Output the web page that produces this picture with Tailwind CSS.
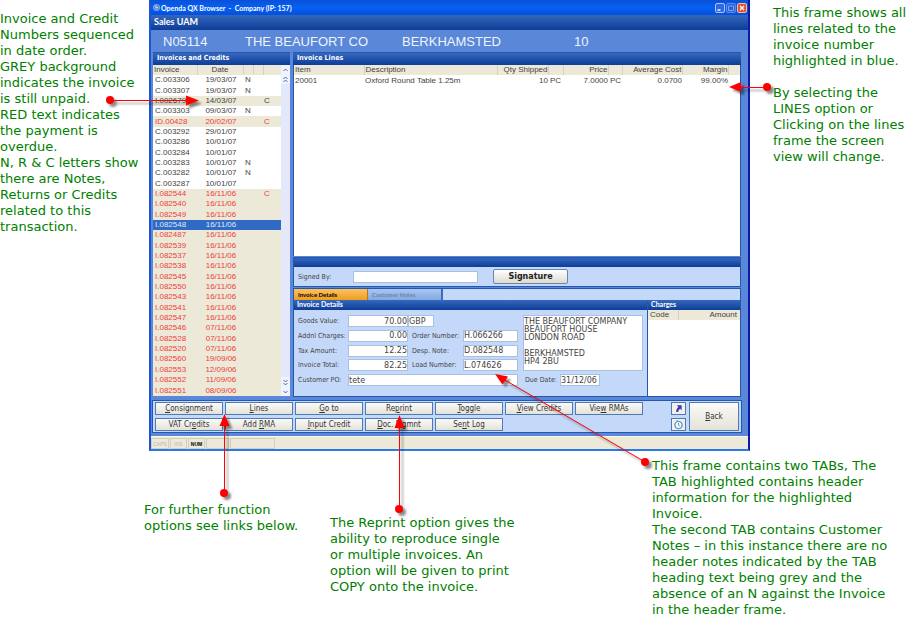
<!DOCTYPE html>
<html lang="en">
<head>
  <meta charset="UTF-8" />
  <title>Sales UAM - Invoices and Credits</title>
  <script src="https://cdn.jsdelivr.net/npm/@tailwindcss/browser@4"></script>
</head>
<body class="relative bg-white font-['DejaVu_Sans',sans-serif] text-[13px] leading-4 text-[#008000]">
  <div class="grid grid-cols-[149px_minmax(0,1fr)_162px]">

    <aside class="pt-[11px] whitespace-nowrap">
      Invoice and Credit<br />Numbers sequenced<br />in date order.<br />GREY background<br />indicates the invoice<br />is still unpaid.<br />RED text indicates<br />the payment is<br />overdue.<br />N, R &amp; C letters show<br />there are Notes,<br />Returns or Credits<br />related to this<br />transaction.
    </aside>

    <!-- application window -->
    <main class="flex flex-col border-l-2 border-r-2 border-b-2 border-l-[#1c55d4] border-r-[#0a1cae] border-b-[#2a7bea] bg-[#5a87d7] text-[8px] leading-[10px] text-[#444]">
      <header class="flex h-[15px] items-center bg-linear-to-b from-[#0a50d8] via-[#0560f2] to-[#0450dc] pl-[2px] font-['Lato',sans-serif] text-[7px] font-bold text-white">
        <svg class="mr-px size-[7px]" viewBox="0 0 8 8"><circle cx="4" cy="4" r="3.5" fill="#4b78c4" stroke="#b8cdf2" stroke-width=".8" /><path d="M2 2.5h3M2.5 4h3.5M3 5.5h2" stroke="#e6efff" stroke-width=".8" /></svg>
        <span class="whitespace-pre">Openda QX Browser  -  Company (IP: 157)</span>
        <div class="ml-auto flex gap-px pr-px">
          <button aria-label="Minimize" class="size-[10px] rounded-[2px] border border-[#a9c4f7] bg-[#2f68e0]"><svg viewBox="0 0 8 8"><path d="M1.500 6h3" stroke="#fff" stroke-width="1.500" /></svg></button>
          <button aria-label="Maximize" class="size-[10px] rounded-[2px] border border-[#5c8bee] bg-[#2a60d8]"><svg viewBox="0 0 8 8"><path d="M1.500 2h5v4.500h-5z" fill="none" stroke="#7fa4f0" /></svg></button>
          <button aria-label="Close" class="size-[10px] rounded-[2px] border border-[#f3b7a2] bg-[#e2562e]"><svg viewBox="0 0 8 8"><path d="M2 2l4 4M6 2L2 6" stroke="#fff" stroke-width="1.200" /></svg></button>
        </div>
      </header>

      <h1 class="h-[15px] bg-linear-to-b from-[#3467bb] to-[#0d3d98] pl-[3px] font-['Lato',sans-serif] text-[9px] leading-[14px] font-bold text-white">Sales UAM</h1>

      <div class="flex h-[22px] items-center pt-[2px] pl-3 font-['Liberation_Sans',sans-serif] text-[13px] whitespace-nowrap text-[#eef4ff]">
        <span class="w-[82px]">N05114</span>
        <span class="w-[157px]">THE BEAUFORT CO</span>
        <span class="w-[172px]">BERKHAMSTED</span>
        <span>10</span>
      </div>

      <div class="flex gap-[3px] pr-[7px] pl-[2px]">
        <!-- invoice list -->
        <section class="flex w-[137px] shrink-0 flex-col">
          <h2 class="h-[13px] border-t border-[#2457b0] bg-linear-to-b from-[#3568bd] to-[#0d3d98] pl-1 font-['DejaVu_Sans_Condensed',sans-serif] text-[7px] leading-[11px] font-bold text-white">Invoices and Credits</h2>
          <div class="flex bg-white">
            <table class="h-[331px] w-[128px] table-fixed border-collapse font-['Liberation_Sans',sans-serif] leading-[10px]">
              <colgroup><col class="w-[44px]" /><col class="w-[46px]" /><col class="w-[10px]" /><col class="w-[10px]" /><col class="w-[18px]" /></colgroup>
              <thead>
                <tr class="bg-[#ece9d8] text-left">
                  <th class="border-r border-[#d6d2c0] pl-px font-normal">Invoice</th>
                  <th class="border-r border-[#d6d2c0] text-center font-normal">Date</th>
                  <th class="border-r border-[#d6d2c0]"></th>
                  <th class="border-r border-[#d6d2c0]"></th>
                  <th></th>
                </tr>
              </thead>
              <tbody id="invoices"></tbody>
            </table>
            <div class="flex grow flex-col items-center justify-between bg-[#e3e8fb]">
              <svg class="h-[19px] w-[9px] bg-[#eef3ff]" viewBox="0 0 9 19" fill="none" stroke="#4d6fa8"><path d="M2.500 6l2-2 2 2M2.500 14l2-2 2 2M2.500 17l2-2 2 2" /></svg>
              <svg class="h-[19px] w-[9px] bg-[#eef3ff]" viewBox="0 0 9 19" fill="none" stroke="#4d6fa8"><path d="M2.500 3l2 2 2-2M2.500 6l2 2 2-2M2.500 14l2 2 2-2" /></svg>
            </div>
          </div>
        </section>

        <div class="flex min-w-0 grow flex-col">
          <!-- invoice lines -->
          <section>
            <h2 class="h-[13px] border-t border-[#2457b0] bg-linear-to-b from-[#3568bd] to-[#0d3d98] pl-1 font-['DejaVu_Sans_Condensed',sans-serif] text-[7px] leading-[11px] font-bold text-white">Invoice Lines</h2>
            <div class="h-[191px] border-x border-[#2457b0] bg-white">
              <table class="w-full table-fixed border-collapse font-['Liberation_Sans',sans-serif] leading-[10px] whitespace-nowrap">
                <colgroup><col class="w-[70px]" /><col /><col class="w-[51px]" /><col class="w-[15px]" /><col class="w-[45px]" /><col class="w-[14px]" /><col class="w-[60px]" /><col class="w-[46px]" /><col class="w-[12px]" /></colgroup>
                <thead>
                  <tr class="bg-[#ece9d8] text-right">
                    <th class="border-r border-[#d6d2c0] pl-px text-left font-normal">Item</th>
                    <th class="border-r border-[#d6d2c0] pl-px text-left font-normal">Description</th>
                    <th class="border-r border-[#d6d2c0] font-normal">Qty Shipped</th>
                    <th class="border-r border-[#d6d2c0]"></th>
                    <th class="border-r border-[#d6d2c0] font-normal">Price</th>
                    <th class="border-r border-[#d6d2c0]"></th>
                    <th class="border-r border-[#d6d2c0] font-normal">Average Cost</th>
                    <th class="border-r border-[#d6d2c0] font-normal">Margin</th>
                    <th></th>
                  </tr>
                </thead>
                <tbody>
                  <tr class="text-right">
                    <td class="pt-px pl-px text-left">20001</td>
                    <td class="pt-px pl-px text-left">Oxford Round Table 1.25m</td>
                    <td class="pt-px">10</td>
                    <td class="pt-px pl-[2px] text-left">PC</td>
                    <td class="pt-px">7.0000</td>
                    <td class="pt-px pl-[2px] text-left">PC</td>
                    <td class="pt-px">0.0700</td>
                    <td class="pt-px">99.00%</td>
                    <td></td>
                  </tr>
                </tbody>
              </table>
            </div>
          </section>

          <!-- signature -->
          <section class="mt-px border border-[#2457b0] bg-[#c4d9f9]">
            <div class="h-[9px] bg-linear-to-b from-[#3568bd] to-[#0d3d98]"></div>
            <div class="flex h-[19px] items-center pl-1 font-['DejaVu_Sans_Condensed',sans-serif]">
              <label for="signed" class="w-[55px] text-[7px]">Signed By:</label>
              <input id="signed" class="h-3 w-[125px] border border-[#a9c0de] bg-white" />
              <button class="ml-[15px] h-[15px] w-[75px] rounded-[2px] border border-[#6a86ac] bg-linear-to-b from-white to-[#dddace] font-['DejaVu_Sans',sans-serif] text-[8px] leading-[12px] font-bold text-[#222]">Signature</button>
            </div>
          </section>

          <!-- details tabs -->
          <section class="mt-px border border-[#2457b0] bg-[#c4d9f9]">
            <div class="flex h-[11px] font-['Lato',sans-serif] text-[6px] leading-[10px] font-bold">
              <button class="w-[74px] border-r border-[#b07a1c] bg-linear-to-b from-[#fcc25c] to-[#ee9c1d] pl-1 text-left text-black">Invoice Details</button>
              <button class="w-[75px] border-r-2 border-[#3c6cbc] bg-linear-to-b from-[#a9c6f0] to-[#82a9e2] pl-1 text-left text-[#71839f]">Customer Notes</button>
            </div>
            <div class="flex">
              <div class="flex min-w-0 grow flex-col">
                <h2 class="h-[10px] bg-linear-to-b from-[#3568bd] to-[#0d3d98] pl-[3px] font-['Lato',sans-serif] text-[7px] leading-[9px] font-bold text-white">Invoice Details</h2>
                <form class="flex h-[86px] gap-[5px] pt-[5px] pb-[10px] pl-1 font-['DejaVu_Sans_Condensed',sans-serif] text-[7px] whitespace-nowrap">
                  <div class="flex w-[220px] shrink-0 flex-col justify-between">
                    <div class="flex items-center">
                      <label for="goods" class="w-[50px]">Goods Value:</label>
                      <input id="goods" value="70.00" class="h-3 w-[60px] border border-[#a9c0de] bg-white text-right font-['DejaVu_Sans',sans-serif] text-[8px]" />
                      <input aria-label="Currency" value="GBP" class="h-3 w-[26px] border border-[#a9c0de] bg-white font-['DejaVu_Sans',sans-serif] text-[8px]" />
                    </div>
                    <div class="flex items-center">
                      <label for="addnl" class="w-[50px]">Addnl Charges:</label>
                      <input id="addnl" value="0.00" class="h-3 w-[60px] border border-[#a9c0de] bg-white text-right font-['DejaVu_Sans',sans-serif] text-[8px]" />
                      <label for="order" class="w-[55px] pl-1">Order Number:</label>
                      <input id="order" value="H.066266" class="h-3 w-[55px] border border-[#a9c0de] bg-white font-['DejaVu_Sans',sans-serif] text-[8px]" />
                    </div>
                    <div class="flex items-center">
                      <label for="tax" class="w-[50px]">Tax Amount:</label>
                      <input id="tax" value="12.25" class="h-3 w-[60px] border border-[#a9c0de] bg-white text-right font-['DejaVu_Sans',sans-serif] text-[8px]" />
                      <label for="desp" class="w-[55px] pl-1">Desp. Note:</label>
                      <input id="desp" value="D.082548" class="h-3 w-[55px] border border-[#a9c0de] bg-white font-['DejaVu_Sans',sans-serif] text-[8px]" />
                    </div>
                    <div class="flex items-center">
                      <label for="total" class="w-[50px]">Invoice Total:</label>
                      <input id="total" value="82.25" class="h-3 w-[60px] border border-[#a9c0de] bg-white text-right font-['DejaVu_Sans',sans-serif] text-[8px]" />
                      <label for="load" class="w-[55px] pl-1">Load Number:</label>
                      <input id="load" value="L.074626" class="h-3 w-[55px] border border-[#a9c0de] bg-white font-['DejaVu_Sans',sans-serif] text-[8px]" />
                    </div>
                    <div class="flex items-center">
                      <label for="po" class="w-[50px]">Customer PO:</label>
                      <input id="po" value="tete" class="h-3 w-[170px] border border-[#a9c0de] bg-white font-['DejaVu_Sans',sans-serif] text-[8px]" />
                    </div>
                  </div>
                  <div class="flex w-[120px] shrink-0 flex-col justify-between">
                    <textarea aria-label="Address" class="block h-[56px] w-full resize-none overflow-hidden border border-[#a9c0de] bg-white pt-[2px] font-['DejaVu_Sans',sans-serif] text-[8px] leading-[8px]">THE BEAUFORT COMPANY
BEAUFORT HOUSE
LONDON ROAD

BERKHAMSTED
HP4 2BU</textarea>
                    <div class="flex items-center">
                      <label for="due" class="w-[37px] pl-[2px]">Due Date:</label>
                      <input id="due" value="31/12/06" class="h-3 w-10 border border-[#a9c0de] bg-white font-['DejaVu_Sans',sans-serif] text-[8px]" />
                    </div>
                  </div>
                </form>
              </div>
              <div class="w-[93px] shrink-0 border-l border-[#2457b0] bg-white">
                <h2 class="h-[10px] bg-linear-to-b from-[#3568bd] to-[#0d3d98] pl-[3px] font-['Lato',sans-serif] text-[7px] leading-[9px] font-bold text-white">Charges</h2>
                <table class="w-full border-collapse font-['Liberation_Sans',sans-serif]">
                  <tr class="bg-[#ece9d8]">
                    <th class="w-[30px] border-r border-[#d6d2c0] pl-[2px] text-left font-normal">Code</th>
                    <th class="pr-[3px] text-right font-normal">Amount</th>
                  </tr>
                </table>
              </div>
            </div>
          </section>
        </div>
      </div>

      <!-- function buttons -->
      <div class="mt-[3px] mr-[6px] ml-px border border-[#2457b0] bg-[#c4d9f9]">
        <div class="flex gap-[2px] py-px pr-[2px] pl-[2px] font-['DejaVu_Sans_Condensed',sans-serif]">
          <div id="functions" class="grid grid-cols-[repeat(7,68px)] gap-x-[2px] gap-y-[3px]"></div>
          <div class="mr-px ml-auto flex flex-col gap-[3px]">
            <button aria-label="Shortcut" class="flex h-[13px] w-[15px] items-center justify-center border border-[#4f7ab5] bg-[#f1f0ea]"><svg class="size-[9px]" viewBox="0 0 10 10"><path d="M3 1.500h5.500V7L6.800 5.300C5.300 6.300 4.700 7.300 4.700 9H2.500C2.300 6.500 3.300 4.800 4.900 3.400z" fill="#3b37b0" /></svg></button>
            <button aria-label="Clock" class="flex h-[13px] w-[15px] items-center justify-center border border-[#4f7ab5] bg-[#f1f0ea]"><svg class="size-[11px]" viewBox="0 0 11 11"><circle cx="5.500" cy="6" r="3.600" fill="#f4faff" stroke="#5b9bcf" stroke-width="1.400" /><path d="M3.500 1.500L5 2.600M5.500 4v2.200l1.400.8" fill="none" stroke="#4a84bb" stroke-width=".9" /></svg></button>
          </div>
          <button class="h-[29px] w-[50px] border border-[#4f7ab5] bg-linear-to-b from-[#fbfaf7] to-[#e4e2d8] text-[#333]"><u>B</u>ack</button>
        </div>
      </div>

      <footer class="mt-[3px] flex h-[13px] items-center gap-px border-t border-[#f8f6ee] bg-[#ece9d8] font-['Liberation_Sans',sans-serif] text-[5px] text-[#bdb9a8]">
        <span class="h-[11px] w-[18px] border border-[#d3cfbd] text-center">CAPS</span>
        <span class="h-[11px] w-[17px] border border-[#d3cfbd] text-center">INS</span>
        <span class="h-[11px] w-[17px] border border-[#d3cfbd] text-center font-bold text-black">NUM</span>
        <span class="h-[11px] w-[23px] border border-[#d3cfbd]"></span>
        <span class="h-[11px] w-[45px] border border-[#d3cfbd]"></span>
      </footer>
    </main>

    <aside class="pt-[5px] pl-[23px] whitespace-nowrap">
      <p>This frame shows all<br />lines related to the<br />invoice number<br />highlighted in blue.</p>
      <p class="mt-4">By selecting the<br />LINES option or<br />Clicking on the lines<br />frame the screen<br />view will change.</p>
    </aside>
  </div>

  <div class="flex items-start pl-[144px] whitespace-nowrap">
    <p class="mt-[51px] w-[186px] shrink-0">For further function<br />options see links below.</p>
    <p class="mt-[64px] w-[322px] shrink-0">The Reprint option gives the<br />ability to reproduce single<br />or multiple invoices. An<br />option will be given to print<br />COPY onto the invoice.</p>
    <p class="mt-[7px] shrink-0">This frame contains two TABs, The<br />TAB highlighted contains header<br />information for the highlighted<br />Invoice.<br />The second TAB contains Customer<br />Notes – in this instance there are no<br />header notes indicated by the TAB<br />heading text being grey and the<br />absence of an N against the Invoice<br />in the header frame.</p>
  </div>

  <!-- callout arrows -->
  <svg class="pointer-events-none absolute top-0 left-0 h-[620px] w-[912px] drop-shadow-[3px_3px_1px_rgba(0,0,0,0.45)]" viewBox="0 0 912 620" fill="#f00" stroke="none">
    <path d="M110 100.500H188M740 87.500H767M224.500 425V493M399.500 427V509M504 379.500L645 462" stroke="#f00" />
    <path d="M199 100.500l-13-5v10zM729 87l12-5v10zM224.500 414l-5 12h10zM399.500 415l-5 13h10zM495 374l13 2.500-5.500 8z" />
    <circle cx="110" cy="100" r="4" /><circle cx="767" cy="87" r="4" /><circle cx="224" cy="493" r="4" /><circle cx="399" cy="509" r="4" /><circle cx="645" cy="462" r="4" />
  </svg>

  <script>
    // number, date, state (paid / unpaid / overdue / selected), note flag, credit flag
    const invoices = [
      ['C.003306', '19/03/07', 'paid', 'N', ''],
      ['C.003307', '19/03/07', 'paid', 'N', ''],
      ['I.002679', '14/03/07', 'unpaid', '', 'C'],
      ['C.003303', '09/03/07', 'paid', 'N', ''],
      ['ID.00428', '20/02/07', 'overdue', '', 'C'],
      ['C.003292', '29/01/07', 'paid', '', ''],
      ['C.003286', '10/01/07', 'paid', '', ''],
      ['C.003284', '10/01/07', 'paid', '', ''],
      ['C.003283', '10/01/07', 'paid', 'N', ''],
      ['C.003282', '10/01/07', 'paid', 'N', ''],
      ['C.003287', '10/01/07', 'paid', '', ''],
      ['I.082544', '16/11/06', 'overdue', '', 'C'],
      ['I.082540', '16/11/06', 'overdue', '', ''],
      ['I.082549', '16/11/06', 'overdue', '', ''],
      ['I.082548', '16/11/06', 'selected', '', ''],
      ['I.082487', '16/11/06', 'overdue', '', ''],
      ['I.082539', '16/11/06', 'overdue', '', ''],
      ['I.082537', '16/11/06', 'overdue', '', ''],
      ['I.082538', '16/11/06', 'overdue', '', ''],
      ['I.082545', '16/11/06', 'overdue', '', ''],
      ['I.082550', '16/11/06', 'overdue', '', ''],
      ['I.082543', '16/11/06', 'overdue', '', ''],
      ['I.082541', '16/11/06', 'overdue', '', ''],
      ['I.082547', '16/11/06', 'overdue', '', ''],
      ['I.082546', '07/11/06', 'overdue', '', ''],
      ['I.082528', '07/11/06', 'overdue', '', ''],
      ['I.082520', '07/11/06', 'overdue', '', ''],
      ['I.082560', '19/09/06', 'overdue', '', ''],
      ['I.082553', '12/09/06', 'overdue', '', ''],
      ['I.082552', '11/09/06', 'overdue', '', ''],
      ['I.082551', '08/09/06', 'overdue', '', '']
    ];
    const rowClass = {
      paid: 'bg-white',
      unpaid: 'bg-[#ece9d8]',
      overdue: 'bg-[#ece9d8] text-[#f04038]',
      selected: 'bg-[#316ac5] text-[#dfe9fb]'
    };
    document.getElementById('invoices').innerHTML = invoices.map(([no, date, state, note, credit]) => `
      <tr class="${rowClass[state]}">
        <td class="pl-[2px]">${no}</td>
        <td class="pl-[2px] text-center">${date}</td>
        <td class="text-center">${note}</td>
        <td></td>
        <td class="pl-px">${credit}</td>
      </tr>`).join('');

    const functions = [
      '<u>C</u>onsignment', '<u>L</u>ines', '<u>G</u>o to', 'Re<u>p</u>rint', '<u>T</u>oggle', '<u>V</u>iew Credits', 'Vie<u>w</u> RMAs',
      'VAT Cr<u>e</u>dits', 'Add <u>R</u>MA', '<u>I</u>nput Credit', '<u>D</u>oc. Mgmnt', 'Se<u>n</u>t Log'
    ];
    document.getElementById('functions').innerHTML = functions.map(label => `
      <button class="h-[13px] border border-[#4f7ab5] bg-linear-to-b from-[#fbfaf7] to-[#e4e2d8] leading-[11px] text-[#333]">${label}</button>`).join('');
  </script>
</body>
</html>
